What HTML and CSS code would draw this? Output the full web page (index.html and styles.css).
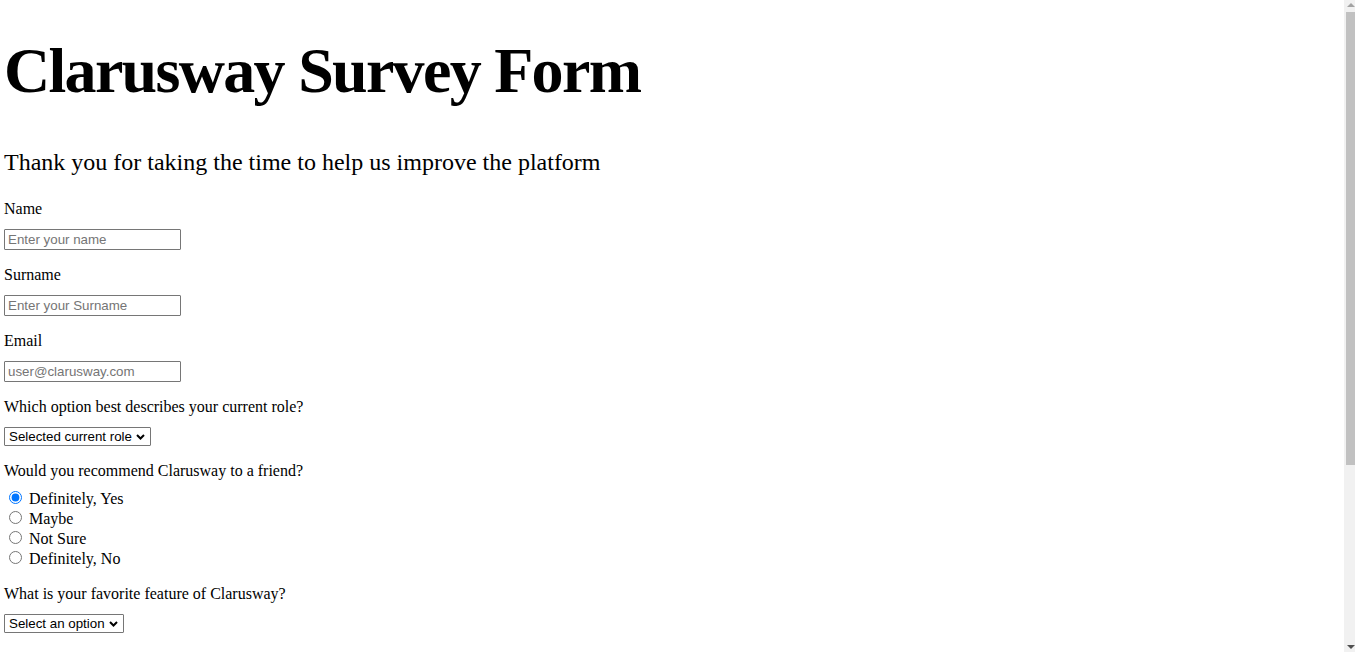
FILE: index.html
```html
<!DOCTYPE html>
<html lang="en">
<head>
<meta charset="utf-8">
<title>Clarusway Survey Form</title>
<link rel="stylesheet" href="styles.css">
</head>
<body>
  <h1 class="title">Clarusway Survey Form</h1>
  <h2 class="subtitle">Thank you for taking the time to help us improve the platform</h2>
  <form class="survey">
    <div class="field">
      <label class="field-label" for="name">Name</label>
      <input class="text-input" id="name" type="text" placeholder="Enter your name">
    </div>
    <div class="field">
      <label class="field-label" for="surname">Surname</label>
      <input class="text-input" id="surname" type="text" placeholder="Enter your Surname">
    </div>
    <div class="field">
      <label class="field-label" for="email">Email</label>
      <input class="text-input" id="email" type="email" placeholder="user@clarusway.com">
    </div>
    <div class="field">
      <label class="field-label" for="role">Which option best describes your current role?</label>
      <span class="select-wrap">
        <select class="dropdown" id="role">
          <option>Selected current role</option>
          <option>Student</option>
          <option>Full Time Job</option>
          <option>Full Time Learner</option>
          <option>Prefer not to say</option>
          <option>Other</option>
        </select>
        <svg class="chevron" width="9" height="6" viewBox="0 0 9 6" aria-hidden="true"><path d="M1 1L4.5 4.5L8 1" fill="none" stroke="#000" stroke-width="2"/></svg>
      </span>
    </div>
    <div class="field">
      <p class="field-label field-label-radio">Would you recommend Clarusway to a friend?</p>
      <label class="radio-row"><input type="radio" name="recommend" checked> Definitely, Yes</label>
      <label class="radio-row"><input type="radio" name="recommend"> Maybe</label>
      <label class="radio-row"><input type="radio" name="recommend"> Not Sure</label>
      <label class="radio-row"><input type="radio" name="recommend"> Definitely, No</label>
    </div>
    <div class="field field-after-radio">
      <label class="field-label" for="feature">What is your favorite feature of Clarusway?</label>
      <span class="select-wrap">
        <select class="dropdown" id="feature">
          <option>Select an option</option>
          <option>Challenges</option>
          <option>Projects</option>
          <option>Community</option>
          <option>Open Source</option>
        </select>
        <svg class="chevron" width="9" height="6" viewBox="0 0 9 6" aria-hidden="true"><path d="M1 1L4.5 4.5L8 1" fill="none" stroke="#000" stroke-width="2"/></svg>
      </span>
    </div>
    <div class="field field-lower">
      <p class="field-label field-label-radio">What would you like to see improved? (Check all that apply)</p>
      <label class="radio-row"><input type="checkbox"> Front-end Projects</label>
      <label class="radio-row"><input type="checkbox"> Back-end Projects</label>
      <label class="radio-row"><input type="checkbox"> Data Visualization</label>
      <label class="radio-row"><input type="checkbox"> Challenges</label>
      <label class="radio-row"><input type="checkbox"> Open Source Community</label>
    </div>
    <div class="field field-after-radio">
      <label class="field-label" for="comments">Any comments or suggestions?</label>
      <textarea class="comments" id="comments" placeholder="Enter your comment here..."></textarea>
    </div>
    <div class="field">
      <button class="submit" type="submit">Submit</button>
    </div>
  </form>

  <div class="scrollbar" aria-hidden="true">
    <span class="scroll-arrow scroll-arrow-up"></span>
    <span class="scroll-thumb"></span>
    <span class="scroll-arrow scroll-arrow-down"></span>
  </div>
</body>
</html>
```

FILE: styles.css
```css
html {
  background: #fff;
}

body {
  margin: 0;
  padding: 0 4px 24px;
  font-family: "Liberation Serif", "Times New Roman", serif;
  font-size: 16px;
  color: #000;
}

.title {
  margin: 34px 0 0;
  font-size: 64px;
  line-height: 74px;
  font-weight: bold;
  letter-spacing: -1.7px;
}

.subtitle {
  margin: 40px 0 0;
  font-size: 24px;
  line-height: 28px;
  font-weight: normal;
}

.survey {
  margin-top: 24px;
  display: flex;
  flex-direction: column;
  align-items: flex-start;
}

.field {
  display: flex;
  flex-direction: column;
  align-items: flex-start;
  margin-bottom: 16px;
}

.field-after-radio {
  margin-top: 1px;
}

.field-lower {
  margin-top: 18px;
}

.field-label {
  display: block;
  margin: 0 0 11px;
  line-height: 18px;
}

.field-label-radio {
  margin-bottom: 8px;
}

.text-input {
  box-sizing: border-box;
  width: 177px;
  height: 21px;
  margin: 0;
  padding: 1px 3px;
  border: 1px solid #767676;
  border-radius: 1px;
  font-family: "Liberation Sans", Arial, sans-serif;
  font-size: 13.33px;
  color: #000;
  background: #fff;
}

.text-input::placeholder,
.comments::placeholder {
  color: #757575;
}

.select-wrap {
  position: relative;
  display: inline-flex;
}

.dropdown {
  -webkit-appearance: none;
  appearance: none;
  box-sizing: border-box;
  height: 19px;
  margin: 0;
  padding: 0 18px 0 4px;
  border: 1px solid #767676;
  border-radius: 1px;
  background: #fff;
  font-family: "Liberation Sans", Arial, sans-serif;
  font-size: 13.33px;
  line-height: 17px;
  color: #000;
}

.chevron {
  position: absolute;
  right: 6px;
  top: 7px;
  pointer-events: none;
}

.radio-row {
  display: block;
  line-height: 20px;
  height: 20px;
}

.radio-row input {
  margin: 3px 3px 0 5px;
  vertical-align: baseline;
}

.comments {
  box-sizing: border-box;
  width: 300px;
  height: 80px;
  border: 1px solid #767676;
  font-family: "Liberation Mono", monospace;
  font-size: 13.33px;
}

.submit {
  font-family: "Liberation Sans", Arial, sans-serif;
  font-size: 13.33px;
}

/* drawn window scrollbar, overlaid at the right edge */
.scrollbar {
  position: fixed;
  top: 0;
  right: 0;
  bottom: 0;
  width: 11px;
  background: #f1f1f1;
}

.scroll-thumb {
  position: absolute;
  top: 12px;
  left: 2px;
  right: 0;
  height: 453px;
  background: #c1c1c1;
}

.scroll-arrow {
  position: absolute;
  left: 3px;
  width: 0;
  height: 0;
  border-left: 4px solid transparent;
  border-right: 4px solid transparent;
}

.scroll-arrow-up {
  top: 3px;
  border-bottom: 4px solid #a3a3a3;
}

.scroll-arrow-down {
  bottom: 3px;
  border-top: 4px solid #505050;
}
```
